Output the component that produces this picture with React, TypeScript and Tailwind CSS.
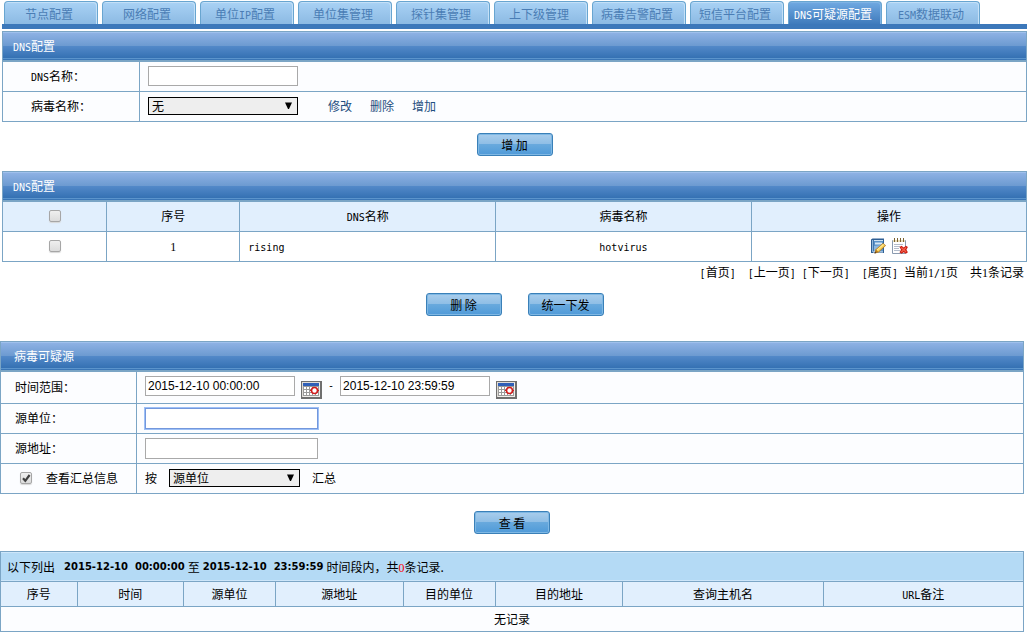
import { useState } from 'react';
import type { ReactNode } from 'react';
import clsx from 'clsx';

const TABS: { id: string; en?: string; before?: string; after?: string }[] = [
  { id: 'node', before: '节点配置' },
  { id: 'network', before: '网络配置' },
  { id: 'unit-ip', before: '单位', en: 'IP', after: '配置' },
  { id: 'unit-set', before: '单位集管理' },
  { id: 'probe-set', before: '探针集管理' },
  { id: 'levels', before: '上下级管理' },
  { id: 'virus-alert', before: '病毒告警配置' },
  { id: 'sms', before: '短信平台配置' },
  { id: 'dns', en: 'DNS', after: '可疑源配置' },
  { id: 'esm', en: 'ESM', after: '数据联动' },
];

const PAPER = 'border-t border-[#7ba5c5] bg-[#fcfdff] p-0 pb-px';
const HEAD = 'border-t border-[#7ba5c5] bg-[#e1effd] p-0 pb-px font-normal';
const PLAIN = 'border-t border-[#7ba5c5] bg-white p-0 pb-[2px]';
const TABLE = 'w-full table-fixed border-separate border-spacing-0';
const TEXT_BOX = 'border border-[#a9a9a9] bg-white px-[2px] outline-none';
const STAMP = "font-['DejaVu_Sans',sans-serif] text-[10px]";

// Half-width latin text between the Chinese characters
function En({ children }: { children: ReactNode }) {
  return (
    <span className="font-['DejaVu_Sans_Mono',monospace] text-[10px] leading-none">
      {children}
    </span>
  );
}

function Num({ children }: { children: ReactNode }) {
  return (
    <span className="font-['Liberation_Serif',serif] leading-none">
      {children}
    </span>
  );
}

function Panel({ title, indent, children }: { title: ReactNode; indent: string; children: ReactNode }) {
  return (
    <section className="border border-[#7ba5c5]">
      <h2
        className={clsx(
          'flex h-[29px] items-center border-b border-[#7ba5c5] bg-[linear-gradient(180deg,#9fc0ec_0px,#9fc0ec_1px,#8db1e4_1px,#6c9ad0_14px,#5389c9_14px,#3571b3_26px,#5b94cc_26px,#5b94cc_27px,#3a76b6_27px,#3a76b6_28px)] font-normal text-white',
          indent
        )}
      >
        <span>{title}</span>
      </h2>
      {children}
    </section>
  );
}

function ActionButton({ children }: { children: ReactNode }) {
  return (
    <button
      type="button"
      className="h-[23px] w-[76px] rounded-[3px] border border-[#3a80b8] bg-[linear-gradient(180deg,#a9cdec_0%,#8dbde5_50%,#68a9dd_50%,#4f9ad8_100%)] text-[12px] leading-[18px] text-black shadow-[inset_0_0_0_1px_#7fb8e4]"
    >
      {children}
    </button>
  );
}

function Select({ id, label, width, options }: { id: string; label: string; width: string; options: string[] }) {
  return (
    <span className={clsx('relative inline-block h-[18px]', width)}>
      <select
        id={id}
        aria-label={label}
        className="block h-[18px] w-full appearance-none border border-black bg-[#eeeeee] pl-[3px] text-[12px] leading-[16px] text-black"
      >
        {options.map((option) => (
          <option key={option}>{option}</option>
        ))}
      </select>
      <svg
        viewBox="0 0 7 7"
        className="pointer-events-none absolute top-[5px] right-[6px] h-[7px] w-[7px]"
      >
        <path d="M0 0.500h7L4 7H3z" fill="#000" />
      </svg>
    </span>
  );
}

function CheckBox({ id, label, defaultChecked }: { id: string; label: string; defaultChecked?: boolean }) {
  return (
    <span className="relative block h-[12px] w-[12px]">
      <input
        id={id}
        type="checkbox"
        aria-label={label}
        defaultChecked={defaultChecked}
        className="peer block h-[12px] w-[12px] appearance-none rounded-[2px] border border-[#a6a6a6] bg-linear-to-b from-[#efefef] to-[#dcdcdc] shadow-[0_1px_1px_#d8d8d8]"
      />
      <svg
        viewBox="0 0 12 12"
        className="pointer-events-none absolute inset-0 hidden peer-checked:block"
      >
        <path d="M3 6.2l2.3 2.6L9.6 3" fill="none" stroke="#404040" strokeWidth="2.2" />
      </svg>
    </span>
  );
}

function CalendarButton({ label }: { label: string }) {
  return (
    <button type="button" aria-label={label} className="mt-[5px] h-[18px] w-[21px]">
      <svg viewBox="0 0 21 18" className="block h-[18px] w-[21px]" shapeRendering="crispEdges">
        <rect width="21" height="18" fill="#6f6f6f" />
        <path d="M1 1h18v15H1z" fill="#dedbd6" />
        <path d="M2 2h17v14H2z" fill="#f1efec" />
        <path d="M2 2h16v3H2z" fill="#2f5fb8" />
        <path d="M2 5h16v10H2z" fill="#9a9a9a" />
        <path
          d="M3 6h2v2H3zm3 0h2v2H6zm3 0h2v2H9zm3 0h2v2h-2zm3 0h2v2h-2zM3 9h2v2H3zm3 0h2v2H6zm3 0h2v2H9zm3 0h2v2h-2zm3 0h2v2h-2zM3 12h2v2H3zm3 0h2v2H6zm3 0h2v2H9zm3 0h2v2h-2zm3 0h2v2h-2z"
          fill="#fff"
        />
        <ellipse
          cx="13.5"
          cy="9.5"
          rx="3"
          ry="3"
          fill="#fff"
          stroke="#d01c1c"
          strokeWidth="1.6"
          shapeRendering="auto"
        />
        <path d="M9 9h2v1H9zM16 9h2v1h-2z" fill="#d01c1c" />
      </svg>
    </button>
  );
}

function EditIcon() {
  return (
    <svg viewBox="0 0 16 16" className="block h-4 w-4">
      <path d="M1 1.500L2.500.500H14v14.500H1z" fill="#2f5f94" />
      <path d="M2 2h1v12H2z" fill="#8fb6dc" />
      <path d="M3.500 2H13v12H3.500z" fill="#5b93c9" />
      <path d="M4 2h9v1H4z" fill="#cfe2f3" />
      <path d="M5 4.500h7v2H5z" fill="#d9e8f5" />
      <path d="M4 8l8-1v4l-4 3H4z" fill="#8db7e0" />
      <path d="M3 13.500h10v1H3z" fill="#dfe9f2" />
      <path d="M4.500 15.500l1-4 7.500-6.500 3 2.500-7.500 7z" fill="#b77b1c" />
      <path d="M6.200 11.800l6.800-6 2 1.700-6.800 6.200z" fill="#fbd45c" />
      <path d="M7 12l6.500-5.600" stroke="#fff0ae" strokeWidth=".9" />
      <path d="M4.500 15.500l.6-2 1.400 1.400z" fill="#4a3520" />
    </svg>
  );
}

function DeleteIcon() {
  return (
    <svg viewBox="0 0 16 16" className="block h-4 w-4">
      <path d="M.5 2.500h13v13H.5z" fill="#fff" stroke="#8b9bb0" />
      <path d="M1 2h12v2H1z" fill="#eadfbd" />
      <path d="M2.500 0v4M5.500 0v4M8.500 0v4M11.500 0v4" stroke="#7b6330" />
      <path d="M2 6.500h9M2 8.500h6M2 10.500h5M2 12.500h6" stroke="#b3bccb" />
      <path
        d="M7.500 9l2-1.200L11.700 9.500l2.200-1.700 2 1.200-1.500 2.700 1.500 2.600-2 1.500-2.200-1.600-2.200 1.600-2-1.500L9 11.700z"
        fill="#c91c10"
      />
      <path d="M9.300 9.600l4.800 4.300M14.100 9.600l-4.800 4.300" stroke="#f4604a" strokeWidth="1.300" />
    </svg>
  );
}

function TabBar() {
  const [active, setActive] = useState('dns');

  return (
    <nav className="flex gap-1 border-b-[5px] border-[#3c78ba] pt-px pl-[2px]">
      {TABS.map((tab) => (
        <a
          key={tab.id}
          href={`#${tab.id}`}
          onClick={() => setActive(tab.id)}
          className={clsx(
            'flex h-[23px] w-[94px] items-center justify-center rounded-t-[4px] border border-b-0 border-[#68a5d0] pt-px pr-1 whitespace-nowrap',
            active === tab.id
              ? 'bg-linear-to-b from-[#70a9e2] to-[#3f7bbc] text-white shadow-[inset_-1px_1px_0_#7fb3e5]'
              : 'bg-linear-to-b from-[#a9d2f5] to-[#8cbae3] text-[#4a7db5] shadow-[inset_-1px_1px_0_#c4e0f7]'
          )}
        >
          <span>
            {tab.before}
            {tab.en && <En>{tab.en}</En>}
            {tab.after}
          </span>
        </a>
      ))}
    </nav>
  );
}

function DnsForm() {
  return (
    <Panel title={<><En>DNS</En>配置</>} indent="pl-[10px]">
      <table className={TABLE}>
        <tbody>
          <tr>
            <td className={clsx(PAPER, 'h-[30px] w-[136px] pl-[28px]')}>
              <label htmlFor="dnsName">
                <En>DNS</En>名称：
              </label>
            </td>
            <td className={clsx(PAPER, 'border-l pl-2')}>
              <input id="dnsName" type="text" className={clsx(TEXT_BOX, 'block h-[20px] w-[150px]')} />
            </td>
          </tr>
          <tr>
            <td className={clsx(PAPER, 'h-[30px] pl-[28px]')}>
              <label htmlFor="virusName">病毒名称：</label>
            </td>
            <td className={clsx(PAPER, 'border-l pl-2')}>
              <div className="flex items-center gap-[18px] text-[#1f4f80]">
                <Select id="virusName" label="病毒名称" width="mr-3 w-[150px]" options={['无']} />
                <a href="#edit">修改</a>
                <a href="#delete">删除</a>
                <a href="#add">增加</a>
              </div>
            </td>
          </tr>
        </tbody>
      </table>
    </Panel>
  );
}

function DnsList() {
  return (
    <Panel title={<><En>DNS</En>配置</>} indent="pl-[10px]">
      <table className={clsx(TABLE, 'text-center')}>
        <thead>
          <tr>
            <th className={clsx(HEAD, 'h-[30px] w-[10.1%]')}>
              <div className="flex justify-center">
                <CheckBox id="all" label="全选" />
              </div>
            </th>
            <th className={clsx(HEAD, 'w-[13%] border-l')}>序号</th>
            <th className={clsx(HEAD, 'w-[25%] border-l')}>
              <En>DNS</En>名称
            </th>
            <th className={clsx(HEAD, 'w-[25%] border-l')}>病毒名称</th>
            <th className={clsx(HEAD, 'border-l')}>操作</th>
          </tr>
        </thead>
        <tbody>
          <tr>
            <td className={clsx(PLAIN, 'h-[30px]')}>
              <div className="flex justify-center">
                <CheckBox id="row1" label="rising" />
              </div>
            </td>
            <td className={clsx(PLAIN, 'border-l')}>
              <Num>1</Num>
            </td>
            <td className={clsx(PLAIN, 'border-l pl-2 text-left')}>
              <En>rising</En>
            </td>
            <td className={clsx(PLAIN, 'border-l')}>
              <En>hotvirus</En>
            </td>
            <td className={clsx(PLAIN, 'border-l')}>
              <div className="flex justify-center gap-[6px]">
                <button type="button" aria-label="修改">
                  <EditIcon />
                </button>
                <button type="button" aria-label="删除">
                  <DeleteIcon />
                </button>
              </div>
            </td>
          </tr>
        </tbody>
      </table>
    </Panel>
  );
}

function Pager() {
  return (
    <div className="flex h-5 items-center justify-end gap-3 pr-[3px]">
      <a href="#first"><En>[</En>首页<En>]</En></a>
      <span className="flex gap-[6px]">
        <a href="#prev"><En>[</En>上一页<En>]</En></a>
        <a href="#next"><En>[</En>下一页<En>]</En></a>
      </span>
      <span className="flex gap-[6px]">
        <a href="#last"><En>[</En>尾页<En>]</En></a>
        <span>当前<Num>1</Num><En>/</En><Num>1</Num>页</span>
      </span>
      <span>共<Num>1</Num>条记录</span>
    </div>
  );
}

function SourceForm() {
  const [start, setStart] = useState('2015-12-10 00:00:00');
  const [end, setEnd] = useState('2015-12-10 23:59:59');

  return (
    <Panel title="病毒可疑源" indent="pl-[13px]">
      <table className={TABLE}>
        <tbody>
          <tr>
            <td className={clsx(PAPER, 'h-[32px] w-[135px] pl-[14px]')}>
              <label htmlFor="start">时间范围：</label>
            </td>
            <td className={clsx(PAPER, 'border-l pl-2')}>
              <div className="flex items-start gap-[6px] font-['Liberation_Sans',Arial,sans-serif]">
                <input
                  id="start"
                  type="text"
                  value={start}
                  onChange={(e) => setStart(e.target.value)}
                  className={clsx(TEXT_BOX, 'h-[20px] w-[150px]')}
                />
                <CalendarButton label="开始时间" />
                <span><En>-</En></span>
                <input
                  id="end"
                  type="text"
                  aria-label="结束时间"
                  value={end}
                  onChange={(e) => setEnd(e.target.value)}
                  className={clsx(TEXT_BOX, 'h-[20px] w-[150px]')}
                />
                <CalendarButton label="结束时间" />
              </div>
            </td>
          </tr>
          <tr>
            <td className={clsx(PAPER, 'h-[30px] pl-[14px]')}>
              <label htmlFor="srcUnit">源单位：</label>
            </td>
            <td className={clsx(PAPER, 'border-l pl-2')}>
              <input
                id="srcUnit"
                type="text"
                autoFocus
                className={clsx(
                  TEXT_BOX,
                  'block h-[21px] w-[173px] caret-black focus:border-[#7397dc] focus:shadow-[0_0_0_1px_#9dc0f7]'
                )}
              />
            </td>
          </tr>
          <tr>
            <td className={clsx(PAPER, 'h-[30px] pl-[14px]')}>
              <label htmlFor="srcAddr">源地址：</label>
            </td>
            <td className={clsx(PAPER, 'border-l pl-2')}>
              <input id="srcAddr" type="text" className={clsx(TEXT_BOX, 'block h-[21px] w-[173px]')} />
            </td>
          </tr>
          <tr>
            <td className={clsx(PAPER, 'h-[30px] pl-[19px]')}>
              <div className="flex items-center gap-[14px]">
                <CheckBox id="summary" label="查看汇总信息" defaultChecked />
                <label htmlFor="summary">查看汇总信息</label>
              </div>
            </td>
            <td className={clsx(PAPER, 'border-l pl-2')}>
              <div className="flex items-center gap-3">
                <label htmlFor="groupBy">按</label>
                <Select id="groupBy" label="按" width="w-[131px]" options={['源单位', '源地址']} />
                <span>汇总</span>
              </div>
            </td>
          </tr>
        </tbody>
      </table>
    </Panel>
  );
}

function ResultList() {
  return (
    <section className="border border-[#7ba5c5]">
      <div className="flex h-[29px] items-center gap-[3px] border-y border-[#cde6fa] bg-[#b4daf5] pl-[6px] whitespace-pre">
        <span className="mr-[6px]">以下列出</span>
        <b className={STAMP}>2015-12-10{'  '}00:00:00</b>
        <span>至</span>
        <b className={STAMP}>2015-12-10{'  '}23:59:59</b>
        <span>
          时间段内，共<span className="text-[#ff0000]"><Num>0</Num></span>条记录.
        </span>
      </div>
      <table className={clsx(TABLE, 'text-center')}>
        <thead>
          <tr>
            <th className={clsx(HEAD, 'h-[25px] w-[7.4%]')}>序号</th>
            <th className={clsx(HEAD, 'w-[10.4%] border-l')}>时间</th>
            <th className={clsx(HEAD, 'w-[9%] border-l')}>源单位</th>
            <th className={clsx(HEAD, 'w-[12.5%] border-l')}>源地址</th>
            <th className={clsx(HEAD, 'w-[9%] border-l')}>目的单位</th>
            <th className={clsx(HEAD, 'w-[12.5%] border-l')}>目的地址</th>
            <th className={clsx(HEAD, 'border-l')}>查询主机名</th>
            <th className={clsx(HEAD, 'border-l')}>
              <En>URL</En>备注
            </th>
          </tr>
        </thead>
        <tbody>
          <tr>
            <td colSpan={8} className={clsx(PAPER, 'h-[25px]')}>
              无记录
            </td>
          </tr>
        </tbody>
      </table>
    </section>
  );
}

export default function App() {
  return (
    <div className="bg-white font-['Noto_Sans_CJK_SC',sans-serif] text-[12px] leading-[18px] text-black">
      <div className="pl-[2px]">
        <TabBar />
        <div className="pt-[2px]">
          <DnsForm />
        </div>
        <div className="flex justify-center pt-[11px] pb-[15px]">
          <ActionButton>增 加</ActionButton>
        </div>
        <DnsList />
        <Pager />
        <div className="flex justify-center gap-[26px] pt-[11px] pb-[25px]">
          <ActionButton>删 除</ActionButton>
          <ActionButton>统一下发</ActionButton>
        </div>
      </div>
      <div className="pr-[3px]">
        <SourceForm />
        <div className="flex justify-center py-[17px]">
          <ActionButton>查 看</ActionButton>
        </div>
        <ResultList />
      </div>
    </div>
  );
}
